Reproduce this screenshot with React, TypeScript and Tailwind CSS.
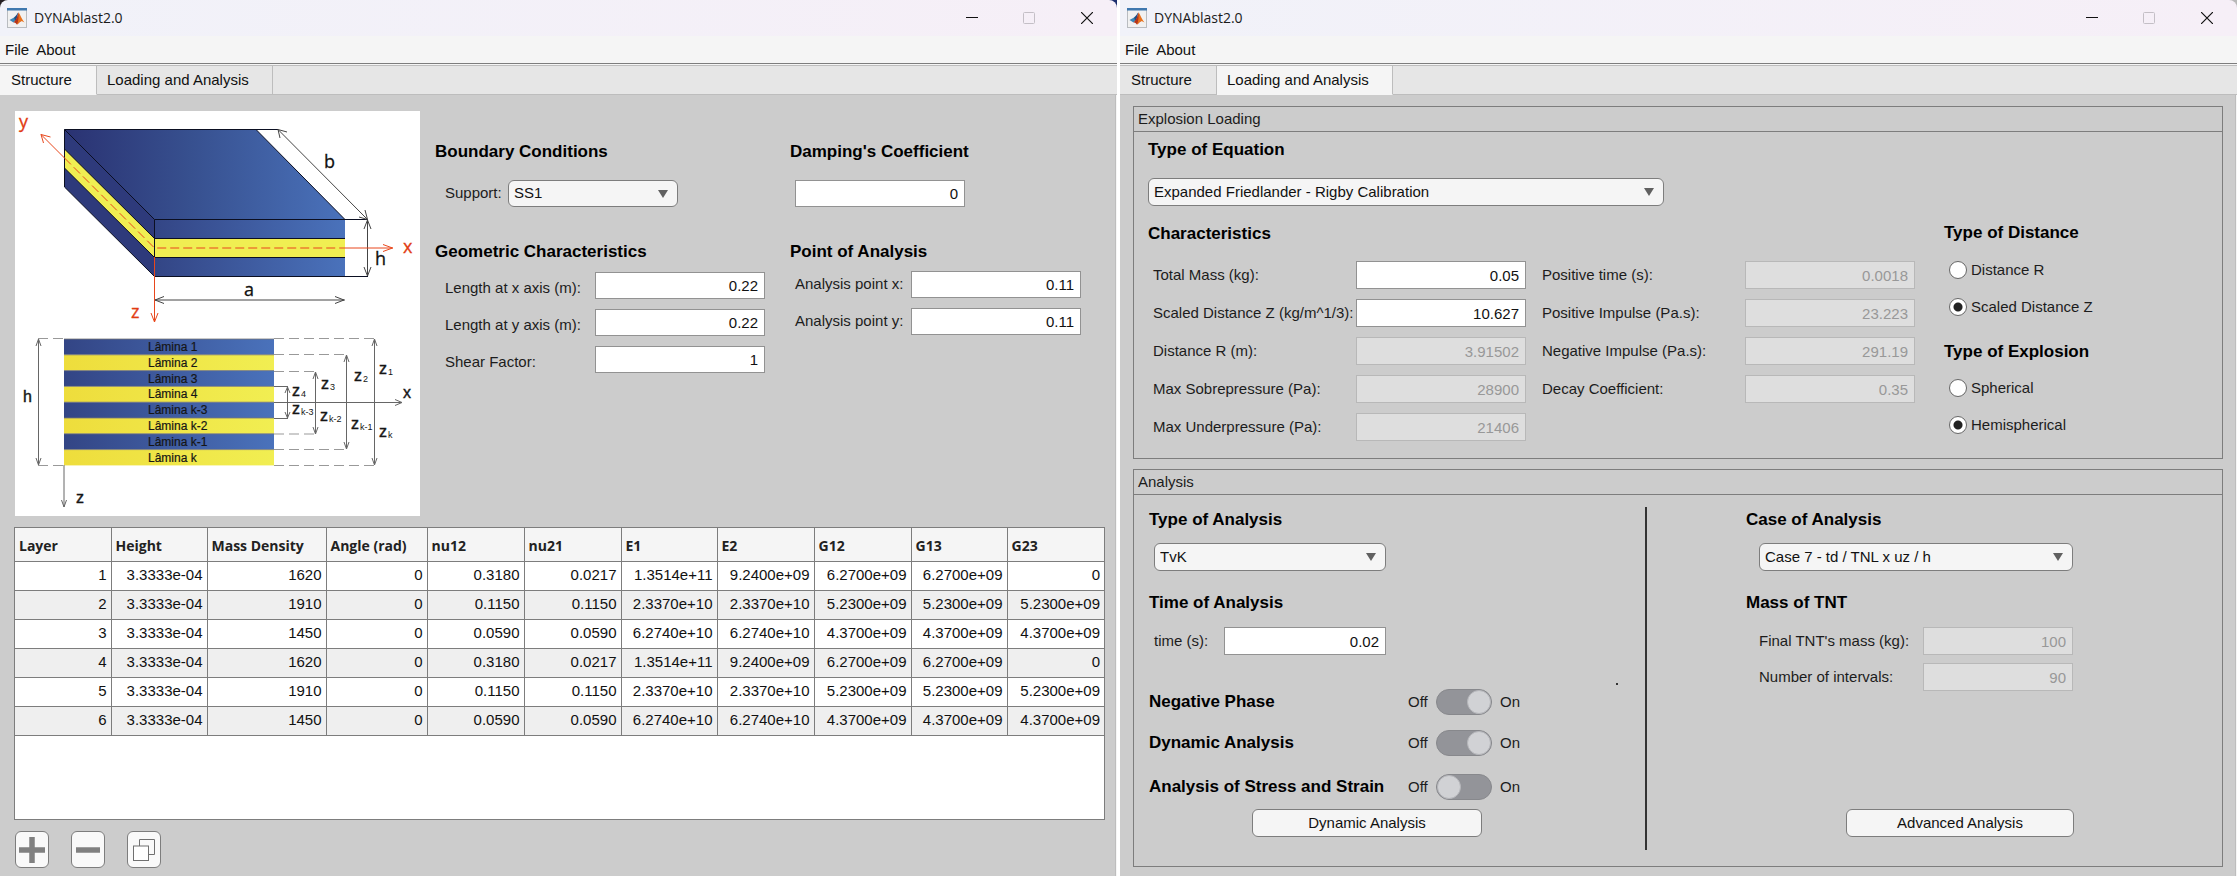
import React, { useId, useState } from "react";

const sans = "font-['Liberation_Sans',Arial,sans-serif]";
const segoe = "font-['Open_Sans','Segoe_UI',sans-serif]";

function MatlabIcon() {
  return (
    <svg viewBox="0 0 20 20" className="h-5 w-5 shrink-0" aria-hidden="true">
      <rect x="0.5" y="0.5" width="19" height="19" fill="#f1f1f1" stroke="#b9bcc0" />
      <rect x="0" y="0" width="20" height="2.5" fill="#3f78ae" />
      <path d="M2.5 12 L7 9.5 L9.5 11.5 L6.5 14.5 Z" fill="#3a86b8" />
      <path d="M7 9.5 C9 8.5 10 5.5 11.3 4.6 L9.5 11.5 L8.2 12.8 Z" fill="#1d4f83" />
      <path d="M11.3 4.6 C10.5 8 9.5 12 6.5 14.5 C8.2 14 9.2 15.6 9.9 16.6 C11.5 15.8 12.8 13.4 14 13.2 Z" fill="#b3331a" />
      <path d="M11.3 4.6 C12.8 5.2 14.5 11 17.5 14.6 C15.8 13.6 14.8 12.8 13.4 13.6 C11.9 14.4 11.2 16.1 9.9 16.6 C11.7 13 11.8 8.5 11.3 4.6 Z" fill="#e8721c" />
    </svg>
  );
}

function TitleBar({ corners }: { corners: string }) {
  return (
    <header
      className={`${segoe} ${corners} flex h-9 items-center gap-[7px] bg-linear-to-r from-[#f1f2f9] to-[#f6eff7] pl-[7px] text-[14px] text-[#1b1b1b]`}
    >
      <MatlabIcon />
      <h1 className="flex-1 leading-5">DYNAblast2.0</h1>
      <button type="button" aria-label="Minimize" className="flex h-9 w-[58px] items-center justify-center">
        <svg viewBox="0 0 12 12" className="h-3 w-3" aria-hidden="true">
          <path d="M0 5.5H12" stroke="#111" />
        </svg>
      </button>
      <button type="button" aria-label="Maximize" disabled className="-mx-2 flex h-9 w-[58px] items-center justify-center">
        <svg viewBox="0 0 12 12" className="h-3 w-3" aria-hidden="true">
          <rect x="0.5" y="0.5" width="11" height="11" rx="1" fill="none" stroke="#c4bfc6" />
        </svg>
      </button>
      <button type="button" aria-label="Close" className="flex h-9 w-[60px] items-center justify-center">
        <svg viewBox="0 0 12 12" className="h-3 w-3" aria-hidden="true">
          <path d="M0 0L12 12M12 0L0 12" stroke="#111" strokeWidth="1.2" />
        </svg>
      </button>
    </header>
  );
}

function MenuBar() {
  return (
    <nav className="flex h-7 items-center gap-[7px] border-b border-[#7d7d7d] bg-[#f5f5f5] pt-px pl-[5px] text-[15px] text-[#111]">
      <button type="button">File</button>
      <button type="button">About</button>
    </nav>
  );
}

function Tabs({ active }: { active: "structure" | "loading" }) {
  const on = "bg-[#f5f5f5] border-b-[#f5f5f5]";
  const off = "bg-[#e6e6e6] border-b-[#bdbdbd]";
  return (
    <div role="tablist" className="mt-px flex h-[30px] border-t border-[#bdbdbd] bg-[#e6e6e6] text-[15px] text-[#111]">
      <button
        type="button"
        role="tab"
        aria-selected={active === "structure"}
        className={`w-[97px] border-r border-b border-r-[#bdbdbd] pl-[11px] text-left ${active === "structure" ? on : off}`}
      >
        Structure
      </button>
      <button
        type="button"
        role="tab"
        aria-selected={active === "loading"}
        className={`w-[176px] border-r border-b border-r-[#bdbdbd] pl-2.5 text-left ${active === "loading" ? on : off}`}
      >
        Loading and Analysis
      </button>
      <div className="flex-1 border-b border-[#bdbdbd]" />
    </div>
  );
}

function AppWindow({
  active,
  corners,
  children,
}: {
  active: "structure" | "loading";
  corners: string;
  children: React.ReactNode;
}) {
  return (
    <section className="flex min-w-0 flex-col">
      <TitleBar corners={corners} />
      <div className="flex flex-1 flex-col bg-[#f5f5f5]">
        <MenuBar />
        <Tabs active={active} />
        <div className="mr-px flex flex-1 flex-col border-r border-[#bdbdbd] bg-[#cccccc]">{children}</div>
      </div>
    </section>
  );
}

function Heading({ children, className = "" }: { children: React.ReactNode; className?: string }) {
  return <h2 className={`text-[17px] leading-6 font-bold whitespace-nowrap text-black ${className}`}>{children}</h2>;
}

function TextBox({ id, value, disabled, label }: { id?: string; value: string; disabled?: boolean; label?: string }) {
  return (
    <input
      id={id}
      aria-label={label}
      defaultValue={value}
      disabled={disabled}
      className="h-full w-full min-w-0 border border-[#929292] bg-white px-1.5 text-right text-[15px] text-[#111] disabled:border-[#b8b8b8] disabled:bg-[#dedede] disabled:text-[#989898]"
    />
  );
}

function Field({
  label,
  value,
  disabled,
  className,
}: {
  label: string;
  value: string;
  disabled?: boolean;
  className: string;
}) {
  const id = useId();
  return (
    <div className={`grid items-center text-[15px] ${className}`}>
      <label htmlFor={id} className="whitespace-nowrap">
        {label}
      </label>
      <TextBox id={id} value={value} disabled={disabled} />
    </div>
  );
}

function Dropdown({ id, label, options, className }: { id?: string; label?: string; options: string[]; className: string }) {
  return (
    <div className={`grid items-center ${className}`}>
      <select
        id={id}
        aria-label={label}
        className="col-start-1 row-start-1 h-full w-full appearance-none rounded-md border border-[#7d7d7d] bg-[#f5f5f5] px-[5px] text-[15px] text-[#111]"
      >
        {options.map((o) => (
          <option key={o}>{o}</option>
        ))}
      </select>
      <svg
        viewBox="0 0 10 8"
        className="pointer-events-none col-start-1 row-start-1 mr-2.5 h-2 w-2.5 justify-self-end"
        aria-hidden="true"
      >
        <path d="M0 0H10L5 8Z" fill="#606060" />
      </svg>
    </div>
  );
}

const LAYERS = ["1", "2", "3", "4", "k-3", "k-2", "k-1", "k"];

const Z_LABELS: [number, number, string][] = [
  [364, 263, "1"],
  [339, 270, "2"],
  [306, 278, "3"],
  [277, 285, "4"],
  [277, 303, "k-3"],
  [305, 310, "k-2"],
  [336, 318, "k-1"],
  [364, 326, "k"],
];

function Figure() {
  return (
    <svg
      viewBox="0 0 405 405"
      role="img"
      aria-label="Laminated plate geometry"
      className="h-[405px] w-[405px] shrink-0 bg-white font-['Open_Sans',sans-serif]"
    >
      <defs>
        <linearGradient id="top" x1="49" x2="330" y1="0" y2="0" gradientUnits="userSpaceOnUse">
          <stop offset="0" stopColor="#2a3272" />
          <stop offset="0.45" stopColor="#37508f" />
          <stop offset="1" stopColor="#4a72bb" />
        </linearGradient>
        <linearGradient id="front" x1="139" x2="330" y1="0" y2="0" gradientUnits="userSpaceOnUse">
          <stop offset="0" stopColor="#334585" />
          <stop offset="1" stopColor="#4a72bb" />
        </linearGradient>
        <linearGradient id="blue" x1="0" x2="1" y1="0" y2="0">
          <stop offset="0" stopColor="#334585" />
          <stop offset="1" stopColor="#4a72bb" />
        </linearGradient>
        <linearGradient id="yellow" x1="0" x2="1" y1="0" y2="0">
          <stop offset="0" stopColor="#eedd3c" />
          <stop offset="1" stopColor="#f1ee52" />
        </linearGradient>
      </defs>

      <path d="M49.5 18.5H241L330 108.5H139.5Z" fill="url(#top)" />
      <path d="M49.5 18.5L139.5 108.5V165.5L49.5 76Z" fill="#2e3a7b" />
      <rect x="139.5" y="108.5" width="190.5" height="57" fill="url(#front)" />
      <path d="M49.5 38L139.5 127.5V146.5L49.5 57Z" fill="#f0ee52" />
      <rect x="139.5" y="127.5" width="190.5" height="19" fill="#f0ee52" />
      <path
        d="M263 18.5H49.5V76L139.5 165.5H353M49.5 18.5L139.5 108.5H353M139.5 108.5V165.5M241 18.5L330 108.5M49.5 38L139.5 127.5H330M49.5 57L139.5 146.5H330"
        fill="none"
        stroke="#0b0f22"
      />
      <g fill="none" stroke="#444">
        <path d="M263 18.5L352.5 108.5M265 27L263 18.5L272 21M344 106L352.5 108.5L350 99" />
        <path d="M352.5 109V165M349 118L352.5 109L356 118M349 156L352.5 165L356 156" />
        <path d="M139.5 189H330M149 185.5L140 189L149 192.5M320 185.5L329 189L320 192.5" />
      </g>
      <g fill="none" stroke="#e8471c">
        <path d="M26 23.5L49.5 47M28.5 32L26 23.5L35.5 26" />
        <path d="M49.5 47L139.5 137H330" strokeDasharray="9 4" />
        <path d="M330 137H378M368 133.5L377.5 137L368 140.5" />
        <path d="M139.5 146V211M136 202L139.5 211L143 202" />
      </g>
      <g fontSize="18" fill="#e23b12" stroke="#e23b12" strokeWidth="0.3">
        <text x="4" y="17">y</text>
        <text x="388" y="142">x</text>
        <text x="116" y="207">z</text>
      </g>
      <g fontSize="18" fill="#111" stroke="#111" strokeWidth="0.3">
        <text x="309" y="57">b</text>
        <text x="360" y="154">h</text>
        <text x="229" y="185">a</text>
      </g>

      {LAYERS.map((name, i) => (
        <g key={name}>
          <rect x="49" y={228 + i * 15.8} width="210" height="15.8" fill={i % 2 ? "url(#yellow)" : "url(#blue)"} />
          <path d={`M49 ${228 + i * 15.8}H259`} stroke="#777" strokeWidth="0.8" />
          <text
            x="133"
            y={240 + i * 15.8}
            fontSize="12"
            fill="#151515"
            stroke="#151515"
            strokeWidth="0.2"
            className="font-['Liberation_Sans',Arial,sans-serif]"
          >
            Lâmina {name}
          </text>
        </g>
      ))}
      <g fill="none" stroke="#999" strokeDasharray="10 5">
        <path d="M23 227.5H49M23 354.5H49M259 227.5H360M259 354.5H360" />
        <path d="M259 243.5H332M259 338.5H332M259 260.5H301M259 323H301" />
      </g>
      <g fill="none" stroke="#666">
        <path d="M259 275.5H273M259 307.5H273M259 291.5H387M380 288.5L387 291.5L380 294.5" />
        <path d="M23.5 228V354M21 235L23.5 228L26 235M21 347L23.5 354L26 347" />
        <path d="M49 354V396M46.5 389L49 396L51.5 389" />
        <path d="M359.5 228V354M357 235L359.5 228L362 235M357 347L359.5 354L362 347" />
        <path d="M331.5 244V338M329 251L331.5 244L334 251M329 331L331.5 338L334 331" />
        <path d="M300.5 261V323M298 268L300.5 261L303 268M298 316L300.5 323L303 316" />
        <path d="M272.5 276V307M270 282L272.5 276L275 282M270 301L272.5 307L275 301" />
      </g>
      <g
        fontSize="16"
        fill="#151515"
        stroke="#151515"
        strokeWidth="0.4"
        className="font-['Liberation_Sans',Arial,sans-serif]"
      >
        <text x="8" y="291">h</text>
        <text x="388" y="287">x</text>
        <text x="61" y="392">z</text>
        {Z_LABELS.map(([x, y, sub]) => (
          <text key={sub} x={x} y={y}>
            z
            <tspan fontSize="9" dy="1" dx="1" strokeWidth="0">
              {sub}
            </tspan>
          </text>
        ))}
      </g>
    </svg>
  );
}

const COLUMNS: [string, string][] = [
  ["Layer", "w-[96px]"],
  ["Height", "w-[96px]"],
  ["Mass Density", "w-[119px]"],
  ["Angle (rad)", "w-[101px]"],
  ["nu12", "w-[97px]"],
  ["nu21", "w-[97px]"],
  ["E1", "w-[96px]"],
  ["E2", "w-[97px]"],
  ["G12", "w-[97px]"],
  ["G13", "w-[96px]"],
  ["G23", "w-[97px]"],
];

const MATERIALS = [
  ["3.3333e-04", "1620", "0", "0.3180", "0.0217", "1.3514e+11", "9.2400e+09", "6.2700e+09", "6.2700e+09", "0"],
  ["3.3333e-04", "1910", "0", "0.1150", "0.1150", "2.3370e+10", "2.3370e+10", "5.2300e+09", "5.2300e+09", "5.2300e+09"],
  ["3.3333e-04", "1450", "0", "0.0590", "0.0590", "6.2740e+10", "6.2740e+10", "4.3700e+09", "4.3700e+09", "4.3700e+09"],
];
const ROWS = [...MATERIALS, ...MATERIALS];

function LayerTable() {
  return (
    <div className="mr-[10px] ml-[14px] h-[293px] border border-[#7d7d7d] bg-white">
      <table className="w-full table-fixed border-collapse text-[15px] text-[#111]">
        <thead>
          <tr className={`${segoe} h-[33px] bg-[#f5f5f5] text-left text-[14px] text-[#222]`}>
            {COLUMNS.map(([name, width]) => (
              <th
                key={name}
                scope="col"
                className={`${width} border-r border-b border-[#7d7d7d] pt-0.5 pl-1 font-bold whitespace-nowrap last:border-r-0`}
              >
                {name}
              </th>
            ))}
          </tr>
        </thead>
        <tbody>
          {ROWS.map((row, i) => (
            <tr key={i} className="h-[29px] bg-white even:bg-[#efefef]">
              {[String(i + 1), ...row].map((cell, j) => (
                <td key={j} className="border-r border-b border-[#7d7d7d] p-0 pr-1 text-right last:border-r-0">
                  {cell}
                </td>
              ))}
            </tr>
          ))}
        </tbody>
      </table>
    </div>
  );
}

const toolButton = "flex h-[37px] w-[34px] items-center justify-center rounded-md border border-[#7d7d7d] bg-[#f9f9f9]";

function StructureWindow() {
  const supportId = useId();
  const length = "h-[27px] grid-cols-[150px_170px] items-end";
  const point = "h-[27px] grid-cols-[116px_170px]";
  return (
    <AppWindow active="structure" corners="rounded-t-lg">
      <div className="flex pt-4 pl-[15px]">
        <Figure />
        <div className="grid flex-1 grid-cols-[355px_1fr] pt-[29px] pl-[15px]">
          <div>
            <Heading>Boundary Conditions</Heading>
            <div className="mt-4 flex h-[27px] items-center pl-2.5 text-[15px]">
              <label htmlFor={supportId} className="w-[63px]">
                Support:
              </label>
              <Dropdown id={supportId} options={["SS1"]} className="h-[27px] w-[170px]" />
            </div>
            <Heading className="mt-[33px]">Geometric Characteristics</Heading>
            <div className="mt-2 grid gap-2.5 pl-2.5">
              <Field className={length} label="Length at x axis (m):" value="0.22" />
              <Field className={length} label="Length at y axis (m):" value="0.22" />
              <Field className={length} label="Shear Factor:" value="1" />
            </div>
          </div>
          <div>
            <Heading>Damping's Coefficient</Heading>
            <div className="mt-4 h-[27px] w-[175px] pl-[5px]">
              <TextBox label="Damping's Coefficient" value="0" />
            </div>
            <Heading className="mt-[33px]">Point of Analysis</Heading>
            <div className="mt-[7px] grid gap-2.5 pl-[5px]">
              <Field className={point} label="Analysis point x:" value="0.11" />
              <Field className={point} label="Analysis point y:" value="0.11" />
            </div>
          </div>
        </div>
      </div>
      <div className="pt-[11px]">
        <LayerTable />
      </div>
      <div className="flex gap-[22px] pt-[11px] pb-2 pl-[15px]">
        <button type="button" aria-label="Add layer" className={toolButton}>
          <svg viewBox="0 0 26 26" className="h-[26px] w-[26px]" aria-hidden="true">
            <path d="M13 0V26M0 13H26" stroke="#808080" strokeWidth="5.5" />
          </svg>
        </button>
        <button type="button" aria-label="Remove layer" className={toolButton}>
          <svg viewBox="0 0 26 26" className="h-[26px] w-[26px]" aria-hidden="true">
            <path d="M1 13H25" stroke="#808080" strokeWidth="5.5" />
          </svg>
        </button>
        <button type="button" aria-label="Duplicate layer" className={toolButton}>
          <svg viewBox="0 0 24 24" className="h-6 w-6" fill="none" stroke="#707070" aria-hidden="true">
            <path d="M7.5 8V1.5H22.5V16.5H16.5" />
            <rect x="1.5" y="8" width="15" height="14.5" fill="#fff" />
          </svg>
        </button>
      </div>
    </AppWindow>
  );
}

function Panel({ title, children }: { title: string; children: React.ReactNode }) {
  return (
    <section className="border border-[#7d7d7d]">
      <h2 className="h-[25px] border-b border-[#7d7d7d] pl-1 text-[15px] leading-6">{title}</h2>
      {children}
    </section>
  );
}

function Radios({ name, options, selected }: { name: string; options: string[]; selected: string }) {
  return (
    <div role="radiogroup" aria-label={name} className="grid gap-[13px] pl-[5px] text-[15px]">
      {options.map((o) => (
        <label key={o} className="flex h-6 items-center gap-1 whitespace-nowrap">
          <input
            type="radio"
            name={name}
            defaultChecked={o === selected}
            className="h-[18px] w-[18px] appearance-none rounded-full border border-[#666] bg-white checked:bg-[radial-gradient(circle,#222_4px,#fff_5px)]"
          />
          {o}
        </label>
      ))}
    </div>
  );
}

function SwitchRow({ label, initial, className }: { label: string; initial: boolean; className: string }) {
  const id = useId();
  const [on, setOn] = useState(initial);
  return (
    <div className={`flex h-6 items-center text-[15px] ${className}`}>
      <label htmlFor={id} className="w-[259px] text-[17px] font-bold whitespace-nowrap text-black">
        {label}
      </label>
      <span className="w-7">Off</span>
      <input
        id={id}
        type="checkbox"
        role="switch"
        checked={on}
        onChange={(e) => setOn(e.target.checked)}
        className="h-[26px] w-14 appearance-none rounded-full border border-[#87888c] bg-[#939499] before:block before:h-6 before:w-6 before:rounded-full before:border before:border-[#b5b6ba] before:bg-[#d1d2d5] checked:before:ml-[30px]"
      />
      <span className="pl-2">On</span>
    </div>
  );
}

const pushButton = "h-7 rounded-md border border-[#7d7d7d] bg-[#f5f5f5] text-[15px] text-[#111]";

function LoadingWindow() {
  const wide = "h-7 grid-cols-[203px_170px]";
  return (
    <AppWindow active="loading" corners="rounded-tr-lg">
      <div className="flex flex-col gap-2.5 pt-[11px] pr-3 pb-[9px] pl-[13px]">
        <Panel title="Explosion Loading">
          <div className="pt-1.5 pb-[17px] pl-3.5">
            <Heading>Type of Equation</Heading>
            <Dropdown
              label="Type of Equation"
              options={["Expanded Friedlander - Rigby Calibration"]}
              className="mt-4 h-7 w-[516px]"
            />
            <div className="mt-[15px] flex">
              <div className="pt-px">
                <Heading>Characteristics</Heading>
                <div className="mt-[15px] flex gap-4 pl-[5px]">
                  <div className="grid content-start gap-2.5">
                    <Field className={wide} label="Total Mass (kg):" value="0.05" />
                    <Field className={wide} label="Scaled Distance Z (kg/m^1/3):" value="10.627" />
                    <Field className={wide} label="Distance R (m):" value="3.91502" disabled />
                    <Field className={wide} label="Max Sobrepressure (Pa):" value="28900" disabled />
                    <Field className={wide} label="Max Underpressure (Pa):" value="21406" disabled />
                  </div>
                  <div className="grid content-start gap-2.5">
                    <Field className={wide} label="Positive time (s):" value="0.0018" disabled />
                    <Field className={wide} label="Positive Impulse (Pa.s):" value="23.223" disabled />
                    <Field className={wide} label="Negative Impulse (Pa.s):" value="291.19" disabled />
                    <Field className={wide} label="Decay Coefficient:" value="0.35" disabled />
                  </div>
                </div>
              </div>
              <div className="pl-[29px]">
                <Heading className="mb-[13px]">Type of Distance</Heading>
                <Radios name="Type of Distance" options={["Distance R", "Scaled Distance Z"]} selected="Scaled Distance Z" />
                <Heading className="mt-[21px] mb-3">Type of Explosion</Heading>
                <Radios name="Type of Explosion" options={["Spherical", "Hemispherical"]} selected="Hemispherical" />
              </div>
            </div>
          </div>
        </Panel>

        <Panel title="Analysis">
          <div className="flex pl-[15px]">
            <div className="relative flex w-[496px] flex-col pt-[13px] pb-[29px]">
              <Heading>Type of Analysis</Heading>
              <Dropdown label="Type of Analysis" options={["TvK"]} className="mt-[11px] ml-[5px] h-7 w-[232px]" />
              <Heading className="mt-5">Time of Analysis</Heading>
              <div className="mt-3 pl-[5px]">
                <Field className="h-7 grid-cols-[70px_162px]" label="time (s):" value="0.02" />
              </div>
              <SwitchRow className="mt-[35px]" label="Negative Phase" initial />
              <SwitchRow className="mt-[17px]" label="Dynamic Analysis" initial />
              <SwitchRow className="mt-5" label="Analysis of Stress and Strain" initial={false} />
              <button type="button" className={`${pushButton} mt-2.5 ml-[103px] w-[230px]`}>
                Dynamic Analysis
              </button>
              <span className="absolute top-[188px] right-[27px] h-0.5 w-0.5 bg-[#333]" />
            </div>
            <div className="mt-3 mb-4 w-0.5 bg-[#333]" />
            <div className="flex w-[427px] flex-col pt-[13px] pb-[29px] pl-[99px]">
              <Heading>Case of Analysis</Heading>
              <Dropdown
                label="Case of Analysis"
                options={["Case 7 - td / TNL x uz / h"]}
                className="mt-[11px] ml-[13px] h-7 w-[314px]"
              />
              <Heading className="mt-5">Mass of TNT</Heading>
              <div className="mt-3 grid gap-2 pl-[13px]">
                <Field className="h-7 grid-cols-[164px_150px]" label="Final TNT's mass (kg):" value="100" disabled />
                <Field className="h-7 grid-cols-[164px_150px]" label="Number of intervals:" value="90" disabled />
              </div>
              <button type="button" className={`${pushButton} mt-auto w-[228px] self-end`}>
                Advanced Analysis
              </button>
            </div>
          </div>
        </Panel>
      </div>
    </AppWindow>
  );
}

export default function App() {
  return (
    <main className={`${sans} grid min-h-screen grid-cols-2 gap-[3px] bg-white text-[#1c1c1c]`}>
      <div className="grid bg-[linear-gradient(90deg,#241f22,#1d2f6e)]">
        <StructureWindow />
      </div>
      <div className="grid bg-[#b9b9b9]">
        <LoadingWindow />
      </div>
    </main>
  );
}
